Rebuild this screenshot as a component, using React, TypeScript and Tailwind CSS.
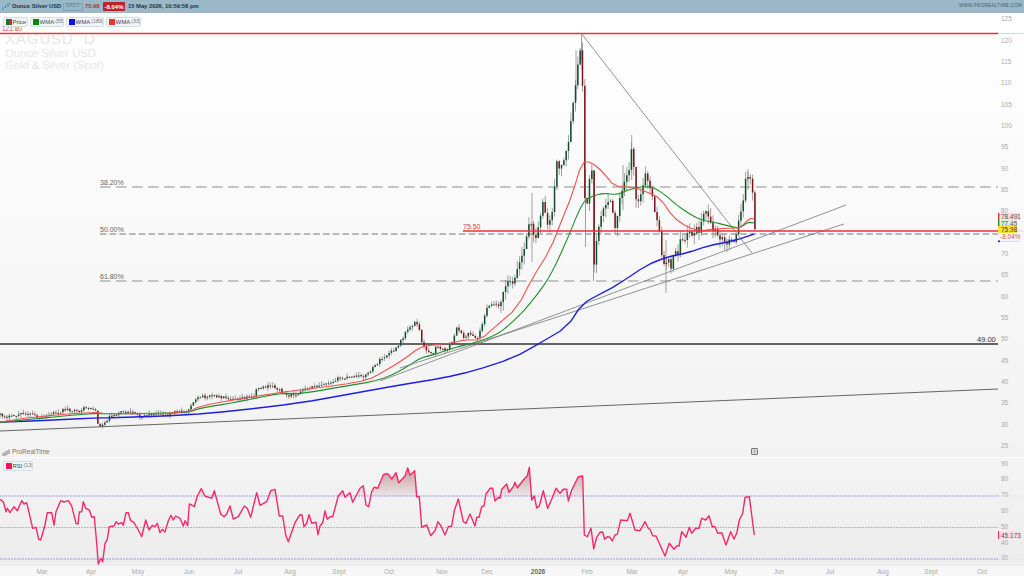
import * as React from 'react';

type Pt = [number, number];

const toPoints = (list: Pt[]) => list.map(([x, y]) => `${x.toFixed(1)},${y.toFixed(1)}`).join(' ');

// zoom-crop coords back to page coords
const fromZoom = (list: number[][], ox: number, oy: number): Pt[] => list.map(([x, y]) => [ox + x / 3, oy + y / 3]);

// corner cutting so the averages don't look like straight segments
const smooth = (list: Pt[], rounds = 2): Pt[] => {
  let cur = list;
  for (let r = 0; r < rounds; r++) {
    const next: Pt[] = [cur[0]];
    for (let i = 0; i < cur.length - 1; i++) {
      const [ax, ay] = cur[i];
      const [bx, by] = cur[i + 1];
      next.push([ax * 0.75 + bx * 0.25, ay * 0.75 + by * 0.25], [ax * 0.25 + bx * 0.75, ay * 0.25 + by * 0.75]);
    }
    next.push(cur[cur.length - 1]);
    cur = next;
  }
  return cur;
};

const priceWay: Pt[] = [
  [0, 415], [10, 417], [25, 413], [33, 415], [40, 419], [48, 415], [60, 411], [67, 409], [77, 412], [87, 407], [95, 410], [97, 418], [99, 428],
  [105, 422], [110, 416], [125, 411], [140, 416], [157, 413], [167, 415], [173, 412], [188, 411], [190, 405], [200, 397], [213, 396], [230, 398],
  [253, 397], [257, 388], [273, 386], [283, 392], [287, 396], [300, 392], [320, 384], [337, 379], [367, 375], [380, 360], [397, 348], [407, 330],
  [415, 322], [420, 330], [422, 345], [432, 355], [437, 345], [445, 351], [453, 342], [457, 325], [463, 338], [470, 333], [477, 340], [482, 325],
  [485, 313], [490, 303], [500, 305], [503, 292], [508, 280], [513, 283], [517, 270], [525, 247], [530, 217], [535, 243], [543, 202], [548, 227],
  [552, 213], [555, 183], [557, 160], [560, 170], [568, 147], [572, 113], [574, 98], [577, 72], [579, 51], [582, 51], [584, 195], [587, 205],
  [590, 172], [592, 172], [594, 265], [597, 235], [601, 215], [605, 205], [610, 200], [613, 215], [616, 232], [619, 200], [622, 190], [626, 175],
  [629, 172], [632, 142], [634, 170], [636, 200], [639, 203], [642, 190], [646, 172], [649, 185], [652, 195], [655, 215], [658, 222], [660, 235],
  [662, 258], [665, 268], [668, 255], [671, 268], [674, 250], [678, 255], [681, 235], [684, 245], [687, 232], [690, 232], [693, 238], [696, 225],
  [700, 235], [702, 215], [706, 212], [710, 220], [713, 232], [716, 227], [719, 240], [722, 238], [726, 245], [729, 240], [733, 243], [736, 235],
  [738, 222], [741, 210], [743, 205], [745, 180], [748, 178], [751, 178], [753, 197], [755, 230],
];

function buildCandles() {
  let seed = 17;
  const rnd = () => {
    seed = (seed * 16807) % 2147483647;
    return seed / 2147483647;
  };
  const out: { x: number; open: number; close: number; hi: number; lo: number }[] = [];
  let prev = priceWay[0][1];
  let w = 0;
  for (let x = 0; x <= 755; x += 2.33) {
    while (w < priceWay.length - 2 && priceWay[w + 1][0] < x) w++;
    const [x0, y0] = priceWay[w];
    const [x1, y1] = priceWay[w + 1];
    const base = y0 + ((y1 - y0) * (x - x0)) / (x1 - x0);
    const close = base + (rnd() - 0.5) * 3;
    const top = Math.min(prev, close);
    const bot = Math.max(prev, close);
    const span = x > 500 ? 9 : 3.5;
    out.push({ x, open: prev, close, hi: top - rnd() * span, lo: bot + rnd() * span });
    prev = close;
  }
  return out;
}

const candles = buildCandles();

const extraWicks: [number, number, number][] = [
  [581.5, 33, 60], [576, 50, 100], [666, 240, 293], [532, 193, 262], [585.5, 170, 247], [631.7, 135, 180], [748, 172, 190], [623, 165, 210],
  [593.5, 170, 281], [582, 60, 70],
];

const blueMa: Pt[] = smooth([
  [0, 422], [33, 421], [94, 418], [117, 417.7], [187, 415], [233, 411], [300, 403], [350, 394], [400, 385], [443, 378], [473, 371], [513, 358],
  [540, 343], [567, 327], [582, 304], [600, 294], [617, 285], [647, 265], [667, 257], [687, 253], [707, 246], [733, 241], [754, 234],
], 1);
const greenMa: Pt[] = smooth([
  [0, 422.7], [33, 419], [95, 413], [107, 414], [187, 413], [200, 408], [233, 403], [280, 393], [300, 394], [340, 387], [382, 380], [407, 367],
  [420, 358], [433, 355], [453, 348], [473, 343], [483, 340], [500, 333], [520, 315], [533, 300], [550, 277], [567, 240], [582, 203], [590, 197],
  [603, 193], [617, 195], [633, 188], [650, 186], [663, 193], [680, 208], [700, 220], [713, 222], [733, 227], [740, 228], [748, 222], [754, 223],
]);
const redMa: Pt[] = smooth([
  [0, 422], [33, 417], [93, 412], [107, 414], [187, 413], [200, 406], [233, 400], [283, 392], [300, 390], [340, 385], [368, 380], [383, 372],
  [403, 360], [420, 347], [433, 345], [453, 343], [463, 340], [480, 340], [497, 325], [517, 308], [533, 277], [550, 250], [563, 217], [572, 195],
  [582, 162], [591, 162], [603, 172], [615, 187], [633, 187], [647, 192], [660, 198], [673, 217], [687, 227], [700, 231], [713, 229], [733, 228],
  [740, 228], [750, 218], [754, 219],
], 1);

const rsiLine: Pt[] = [
  ...fromZoom(
    [[0,358],[10,365],[18,395],[22,385],[30,398],[42,380],[52,392],[65,362],[72,372],[80,368],[90,410],[98,445],[108,442],[116,478],[122,480],[135,435],[142,398],[155,398],[162,435],[168,395],[182,362],[192,366],[205,362],[215,378],[228,430],[234,432],[238,396],[245,395],[250,365],[257,385],[268,390],[275,412],[283,410],[290,490],[295,552],[303,535],[308,545],[315,490],[322,478],[328,440],[342,438],[348,425],[355,432],[365,428],[370,436],[378,398],[385,398],[392,422],[402,428],[415,450],[425,470],[437,420],[447,450],[457,436],[465,440],[472,430],[480,458],[487,448],[495,456],[505,422],[513,406],[520,420],[527,408],[540,415],[550,438],[555,422],[563,437],[568,372],[575,375],[583,380],[592,348],[604,326],[615,348],[635,355],[643,332],[662,402],[672,410],[680,402],[690,378],[700,417],[715,410],[733,378],[742,385],[752,412],[770,338],[780,376],[800,365],[812,332],[825,328],[838,408],[848,408],[857,465],[865,485],[885,428]],
    0, 380,
  ),
  ...fromZoom(
    [[0,224],[6,225],[12,260],[20,250],[27,224],[35,250],[48,247],[54,284],[60,258],[68,248],[75,213],[82,238],[90,230],[98,230],[115,168],[128,152],[135,172],[150,158],[158,187],[180,145],[190,137],[198,195],[206,200],[215,155],[222,142],[233,145],[250,105],[258,101],[265,103],[275,117],[288,98],[296,128],[315,108],[323,84],[330,106],[344,92],[350,170],[358,170],[365,262],[380,255],[392,287],[405,272],[414,245],[423,258],[435,285],[445,260],[455,258],[463,212],[475,177],[490,245],[498,250],[510,222],[525,258],[530,232],[537,232],[545,200],[552,198],[558,162],[570,145],[578,145],[585,183],[595,172],[600,175],[605,148],[620,132],[627,157],[640,140],[645,127],[652,143],[672,118],[682,107],[688,82],[695,180],[703,168],[710,204],[718,198],[730,152],[743,205],[755,178],[768,145],[780,160],[790,148],[800,148],[805,183],[815,150],[835,110],[848,108],[853,285],[862,290],[873,265],[881,326],[890,292]],
    300, 440,
  ),
  ...fromZoom(
    [[0,277],[8,276],[14,298],[22,290],[30,292],[37,303],[45,285],[52,283],[62,240],[82,242],[90,220],[105,270],[120,272],[135,245],[145,265],[150,268],[158,287],[168,288],[195,348],[208,310],[222,328],[230,318],[237,318],[245,275],[258,292],[268,262],[275,280],[287,265],[297,265],[305,235],[317,240],[327,227],[337,260],[345,260],[353,280],[365,278],[378,315],[392,275],[402,297],[410,280],[418,240],[428,220],[435,172],[448,170],[463,285]],
    600, 440,
  ),
];

const priceTicks = [125, 120, 115, 110, 105, 100, 95, 90, 85, 80, 70, 65, 60, 55, 50, 45, 40, 35, 30, 25];
const rsiTicks: [string, number][] = [['90', 464], ['80', 479], ['70', 495], ['60', 511], ['50', 527], ['40', 543], ['30', 558]];
const months: [string, number][] = [
  ['Mar', 42], ['Apr', 91], ['May', 138], ['Jun', 189], ['Jul', 238], ['Aug', 290], ['Sept', 339], ['Oct', 389], ['Nov', 442], ['Dec', 487],
  ['2026', 538], ['Feb', 587], ['Mar', 632], ['Apr', 683], ['May', 731], ['Jun', 779], ['Jul', 830], ['Aug', 883], ['Sept', 931], ['Oct', 982],
];

function Chip({ label, period, swatch, width }: { label: string; period?: string; swatch: React.ReactNode; width: string }) {
  return (
    <div className={`flex h-[10px] items-center gap-[1px] overflow-hidden whitespace-nowrap rounded-[2px] border border-[#cfe0e8] bg-[#f1f5f7] pl-[1.5px] text-[6px] leading-none text-[#444] ${width}`}>
      {swatch}
      <span>{label}</span>
      {period && <span className="text-[5.5px] text-[#777]">{period}</span>}
    </div>
  );
}

function PriceChart() {
  return (
    <svg viewBox="0 13 998 444" className="block h-[444px] w-[998px]">
      <g className="text-[7px]">
        {/* levels */}
        <line x1="0" y1="33.5" x2="998" y2="33.5" stroke="#f23030" strokeWidth="1.4" />
        <line x1="100" y1="187" x2="998" y2="187" stroke="#8f8f8f" strokeWidth="1" strokeDasharray="10.5 5.5" />
        <line x1="100" y1="234" x2="998" y2="234" stroke="#777" strokeWidth="1" strokeDasharray="6.5 3.2" />
        <line x1="100" y1="281" x2="998" y2="281" stroke="#8f8f8f" strokeWidth="1" strokeDasharray="10.5 5.5" />
        <line x1="0" y1="344" x2="998" y2="344" stroke="#333" strokeWidth="1.4" />
        <line x1="0" y1="431" x2="998" y2="389" stroke="#555" strokeWidth="0.9" />
        {/* trend lines */}
        <line x1="581" y1="33" x2="752" y2="253" stroke="#777" strokeWidth="0.8" />
        <line x1="380" y1="381" x2="846" y2="205" stroke="#777" strokeWidth="0.8" />
        <line x1="400" y1="368" x2="844" y2="224" stroke="#777" strokeWidth="0.8" />
        {/* candles */}
        {candles.map((c) => (
          <line key={`w${c.x}`} x1={c.x} y1={c.hi} x2={c.x} y2={c.lo} stroke="#8a8a8a" strokeWidth="0.8" />
        ))}
        {extraWicks.map(([x, a, b]) => (
          <line key={`e${x}`} x1={x} y1={a} x2={x} y2={b} stroke="#8a8a8a" strokeWidth="0.8" />
        ))}
        {candles.map((c) => (
          <line
            key={`b${c.x}`}
            x1={c.x}
            y1={c.open}
            x2={c.x}
            y2={Math.abs(c.close - c.open) < 1 ? c.open + 1 : c.close}
            stroke={c.close <= c.open ? '#0f4f2a' : '#7d1616'}
            strokeWidth="1.5"
          />
        ))}
        {/* moving averages */}
        <polyline points={toPoints(blueMa)} fill="none" stroke="#1f1fe0" strokeWidth="1.4" />
        <polyline points={toPoints(greenMa)} fill="none" stroke="#1f8f2a" strokeWidth="1.1" />
        <polyline points={toPoints(redMa)} fill="none" stroke="#f2504f" strokeWidth="1.1" />
        <line x1="463" y1="231" x2="998" y2="231" stroke="#f23030" strokeWidth="1.6" />
        {/* labels */}
        <text x="100" y="184.5" className="fill-[#666]">38.20%</text>
        <text x="100" y="231.5" className="fill-[#666]">50.00%</text>
        <text x="100" y="278.5" className="fill-[#666]">61.80%</text>
        <text x="463" y="229" className="fill-[#e33]">75.50</text>
        <text x="977" y="342" className="fill-[#333] text-[7.5px]">49.00</text>
        <text x="2" y="31" className="fill-[#f23b3b] text-[6.5px]">121.80</text>
      </g>
    </svg>
  );
}

function PriceAxis() {
  return (
    <svg viewBox="998 13 26 444" className="block h-[444px] w-[26px]">
      <g className="text-[6.5px]">
        <line x1="998" y1="33.5" x2="1024" y2="33.5" stroke="#f9c9c9" strokeWidth="1" />
        <line x1="998" y1="231" x2="1024" y2="231" stroke="#f9c9c9" strokeWidth="1" />
        {priceTicks.map((p) => (
          <text key={p} x="1001" y={19 + ((125 - p) * 21.33) / 5 + 2.3} className="fill-[#aaa]">{p}</text>
        ))}
        <rect x="998" y="213" width="1.6" height="7" fill="#ee3333" />
        <rect x="999.6" y="213" width="20" height="7" fill="#fbdcdc" />
        <text x="1001" y="219" className="fill-[#555]">78.491</text>
        <rect x="998" y="220" width="1.6" height="6" fill="#138a24" />
        <rect x="999.6" y="220" width="17" height="6" fill="#dcefe0" />
        <text x="1001" y="225.5" className="fill-[#555]">77.45</text>
        <rect x="998" y="226" width="19" height="7" fill="#f7e12a" />
        <text x="1001" y="232" className="fill-[#444]">75.98</text>
        <text x="1000" y="238.5" className="fill-[#d85050]">-8.04%</text>
        <rect x="998" y="240.5" width="2" height="1.6" fill="#1f1fe0" />
        <line x1="1000" y1="241.3" x2="1020" y2="241.3" stroke="#c8c8f5" strokeWidth="0.8" />
      </g>
    </svg>
  );
}

function RsiChart() {
  const area = `0,496 ${toPoints(rsiLine)} 755,496`;
  return (
    <svg viewBox="0 457 998 109" className="block h-[109px] w-[998px]">
      <defs>
        <clipPath id="over70">
          <rect x="0" y="457" width="998" height="39" />
        </clipPath>
        <linearGradient id="rsiFill" x1="0" y1="464" x2="0" y2="496" gradientUnits="userSpaceOnUse">
          <stop offset="0" stopColor="#bb9492" />
          <stop offset="1" stopColor="#ece6e6" />
        </linearGradient>
      </defs>
      <polygon points={area} fill="url(#rsiFill)" clipPath="url(#over70)" />
      <line x1="0" y1="496" x2="998" y2="496" stroke="#6e6ee8" strokeWidth="0.8" strokeDasharray="1.6 1.2" />
      <line x1="0" y1="527.5" x2="998" y2="527.5" stroke="#999" strokeWidth="0.8" strokeDasharray="1.6 1.2" />
      <line x1="0" y1="559" x2="998" y2="559" stroke="#6e6ee8" strokeWidth="0.8" strokeDasharray="1.6 1.2" />
      <polyline points={toPoints(rsiLine)} fill="none" stroke="#f5286e" strokeWidth="1.4" strokeLinejoin="round" />
    </svg>
  );
}

function RsiAxis() {
  return (
    <svg viewBox="998 457 26 109" className="block h-[109px] w-[26px]">
      <g className="text-[6.5px]">
        {rsiTicks.map(([t, y]) => (
          <text key={t} x="1001" y={y + 2.3} className="fill-[#aaa]">{t}</text>
        ))}
        <line x1="998" y1="496" x2="1024" y2="496" stroke="#ddd" strokeWidth="0.7" strokeDasharray="1.6 1.2" />
        <line x1="998" y1="559" x2="1024" y2="559" stroke="#ddd" strokeWidth="0.7" strokeDasharray="1.6 1.2" />
        <rect x="998" y="531" width="1.4" height="8" fill="#f5326e" />
        <rect x="999.4" y="531" width="21" height="8" fill="#fbdbe6" />
        <text x="1001" y="537.5" className="fill-[#555]">45.173</text>
      </g>
    </svg>
  );
}

export default function App() {
  return (
    <div className="flex h-[576px] w-[1024px] flex-col overflow-hidden bg-[#f2f2f2] font-['Liberation_Sans',sans-serif]">
      {/* header */}
      <div className="flex h-[13px] items-center bg-[#9ab8c6] pl-[2px] pr-[2px] text-[5.8px] leading-none">
        <svg viewBox="0 0 9 9" className="h-[9px] w-[9px] shrink-0">
          <path d="M1 8V5M3.5 6V3M6 5V1.5M8 3V1" stroke="#3f86c4" strokeWidth="1" fill="none" />
        </svg>
        <span className="ml-[1px] w-[50px] whitespace-nowrap font-bold text-[#1f3644]">Ounce Silver USD</span>
        <span className="ml-[1px] flex h-[8px] w-[20px] items-center justify-center rounded-[1px] border border-[#7f9fb0] text-[4.5px] tracking-[0.3px] text-[#5d7a89]">DAILY</span>
        <span className="ml-[2px] w-[15px] font-bold text-[#a33a3c]">75.98</span>
        <span className="ml-[3px] flex h-[9px] w-[22px] items-center justify-center rounded-[1px] bg-[#b8262b] text-[6px] font-bold text-white">-8.04%</span>
        <span className="ml-[3px] font-bold text-[#1f3644]">15 May 2026, 10:59:58 pm</span>
        <span className="ml-auto text-[4.5px] tracking-[0.3px] text-[#3e5d6e]">WWW.PROREALTIME.COM</span>
      </div>

      {/* price panel */}
      <div className="relative flex h-[444px] bg-gradient-to-b from-white to-[#f2f2f2]">
        <div className="absolute left-[5px] top-[19.5px] flex flex-col text-[#e6e6e6]">
          <span className="text-[15px] leading-[12px] tracking-[0.9px] whitespace-pre">XAGUSD  D</span>
          <span className="mt-[2.5px] text-[11.2px] leading-[12px]">Ounce Silver USD</span>
          <span className="text-[11.2px] leading-[12px]">Gold &amp; Silver (Spot)</span>
        </div>
        <PriceChart />
        <PriceAxis />
        <div className="absolute left-[3px] top-[4px] flex gap-[2px]">
          <Chip
            width="w-[25px]"
            label="Price"
            swatch={
              <span className="flex h-[6px] w-[6px] shrink-0">
                <span className="w-1/2 bg-[#0e7a22]" />
                <span className="w-1/2 bg-[#d22]" />
              </span>
            }
          />
          <Chip width="w-[34px]" label="WMA" period="(55)" swatch={<span className="h-[6px] w-[6px] shrink-0 bg-[#0a860a]" />} />
          <Chip width="w-[38px]" label="WMA" period="(189)" swatch={<span className="h-[6px] w-[6px] shrink-0 bg-[#1010ee]" />} />
          <Chip width="w-[35px]" label="WMA" period="(33)" swatch={<span className="h-[6px] w-[6px] shrink-0 bg-[#ee3333]" />} />
        </div>
        <div className="absolute bottom-[1px] left-[2px] flex items-center gap-[2px] text-[6.5px] leading-none text-[#777]">
          <svg viewBox="0 0 8 7" className="h-[7px] w-[8px]">
            <path d="M1 7V4M3 7V2.5M5 6V1.5M7 5V0.5" stroke="#666" strokeWidth="0.9" fill="none" />
          </svg>
          <span>ProRealTime</span>
        </div>
        <div className="absolute bottom-[2px] left-[751px] flex h-[7px] w-[7px] items-center justify-center rounded-[1px] border border-[#777] bg-[#ddd] text-[5px] leading-none text-[#444]">i</div>
      </div>

      {/* rsi panel */}
      <div className="relative flex h-[109px] border-t border-white bg-gradient-to-b from-[#f4f4f4] to-[#ececec]">
        <div className="-mt-px flex">
          <RsiChart />
          <RsiAxis />
        </div>
        <div className="absolute left-[3px] top-[3px]">
          <Chip width="w-[30px]" label="RSI" period="(13)" swatch={<span className="h-[6px] w-[6px] shrink-0 bg-[#f5126a]" />} />
        </div>
      </div>

      {/* time axis */}
      <svg viewBox="0 566 1024 10" className="block h-[10px] w-[1024px] shrink-0 bg-[#f7f7f7]">
        {months.map(([m, x]) => (
          <text
            key={`${m}${x}`}
            x={x}
            y="573.5"
            textAnchor="middle"
            className={m === '2026' ? 'fill-[#666] text-[6.5px] font-bold' : 'fill-[#aaa] text-[6.5px]'}
          >
            {m}
          </text>
        ))}
      </svg>
    </div>
  );
}
